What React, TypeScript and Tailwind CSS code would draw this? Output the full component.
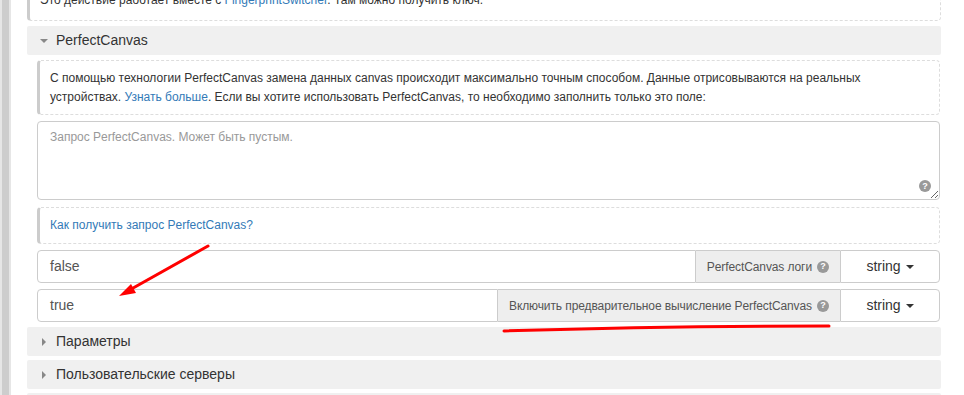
import React from "react";

const FONT = { fontFamily: '"Liberation Sans", Arial, sans-serif' };

function Help({ className = "" }: { className?: string }) {
  return (
    <span
      className={`inline-flex h-[12px] w-[12px] items-center justify-center rounded-full bg-[#999] text-[9px] font-bold leading-none text-white ${className}`}
    >
      ?
    </span>
  );
}

function Caret({ open }: { open: boolean }) {
  return open ? (
    <span className="inline-block h-0 w-0 border-x-[4px] border-t-[4px] border-x-transparent border-t-[#888]" />
  ) : (
    <span className="inline-block h-0 w-0 border-y-[4px] border-l-[4px] border-y-transparent border-l-[#888]" />
  );
}

function SectionHeader({ title, open }: { title: string; open: boolean }) {
  return (
    <div className="flex h-[29px] items-center gap-[8px] rounded-[2px] bg-[#f0f0f0] pl-[13px] text-[14px] text-[#333]">
      <span className="flex w-[8px] justify-center">
        <Caret open={open} />
      </span>
      <span>{title}</span>
    </div>
  );
}

function Callout({ children, className = "" }: { children: React.ReactNode; className?: string }) {
  return (
    <div
      className={`rounded-[4px] border border-dashed border-[#ddd] border-l-[3px] border-l-[#ccc] pl-[10px] pr-[12px] text-[12px] leading-[19px] text-[#333] ${className}`}
      style={{ borderLeftStyle: "solid" }}
    >
      {children}
    </div>
  );
}

function FieldRow({ value, label }: { value: string; label: string }) {
  return (
    <div className="flex h-[33px] text-[#555]">
      <div className="flex flex-1 items-center rounded-l-[4px] border border-[#ccc] px-[12px] text-[14px]">
        {value}
      </div>
      <div className="flex items-center gap-[5px] border-y border-[#ccc] bg-[#eee] pl-[11px] pr-[11px] text-[12px] tracking-[-0.1px]">
        <span>{label}</span>
        <Help />
      </div>
      <div className="flex w-[100px] items-center justify-center gap-[5px] rounded-r-[4px] border border-[#ccc] text-[14px] text-[#333]">
        <span>string</span>
        <span className="inline-block h-0 w-0 border-x-[4px] border-t-[4px] border-x-transparent border-t-[#333]" />
      </div>
    </div>
  );
}

export default function App() {
  return (
    <div className="relative flex h-[395px] w-[964px] overflow-hidden bg-white" style={FONT}>
      <div className="flex h-full w-[11px] shrink-0">
        <div className="w-[2px] bg-[#e6e6e6]" />
        <div className="w-[7px] bg-[#cdcdcd]" />
        <div className="w-[2px] bg-[#e6e6e6]" />
      </div>

      <div className="ml-[16px] flex w-[914px] flex-col">
        <Callout className="-mt-[20px] py-[10px]">
          Это действие работает вместе с <span className="text-[#337ab7]">FingerprintSwitcher</span>. Там
          можно получить ключ.
        </Callout>

        <div className="mt-[5px]">
          <SectionHeader title="PerfectCanvas" open />
        </div>

        <div className="ml-[10px] mr-[1px] mt-[5px] flex flex-col">
          <Callout className="pt-[8px] pb-[7px]">
            С помощью технологии PerfectCanvas замена данных canvas происходит максимально точным способом. Данные
            отрисовываются на реальных устройствах. <span className="text-[#337ab7]">Узнать больше</span>. Если вы
            хотите использовать PerfectCanvas, то необходимо заполнить только это поле:
          </Callout>

          <div className="relative mt-[6px] h-[79px]">
            <textarea
              className="h-full w-full resize-y rounded-[4px] border border-[#ccc] px-[12px] py-[6px] text-[12px] leading-[19px] text-[#555] outline-none placeholder:text-[#999]"
              placeholder="Запрос PerfectCanvas. Может быть пустым."
              style={FONT}
            />
            <Help className="absolute bottom-[8px] right-[9px] bg-[#888]" />
          </div>

          <Callout className="mt-[7px] py-[8px]">
            <span className="text-[#337ab7]">Как получить запрос PerfectCanvas?</span>
          </Callout>

          <div className="mt-[6px] flex flex-col gap-[6px]">
            <FieldRow value="false" label="PerfectCanvas логи" />
            <FieldRow value="true" label="Включить предварительное вычисление PerfectCanvas" />
          </div>
        </div>

        <div className="mt-[5px] flex flex-col gap-[4px]">
          <SectionHeader title="Параметры" open={false} />
          <SectionHeader title="Пользовательские серверы" open={false} />
          <div className="h-[29px] rounded-[2px] bg-[#f0f0f0]" />
        </div>
      </div>

      <svg className="pointer-events-none absolute left-0 top-0" width="964" height="395">
        <line x1="208" y1="246" x2="126" y2="292" stroke="#f00" strokeWidth="3" strokeLinecap="round" />
        <polygon points="119,296 131,284 136,293" fill="#f00" />
        <path d="M504 331 Q 660 326 829 326" stroke="#f00" strokeWidth="3" fill="none" strokeLinecap="round" />
      </svg>
    </div>
  );
}
